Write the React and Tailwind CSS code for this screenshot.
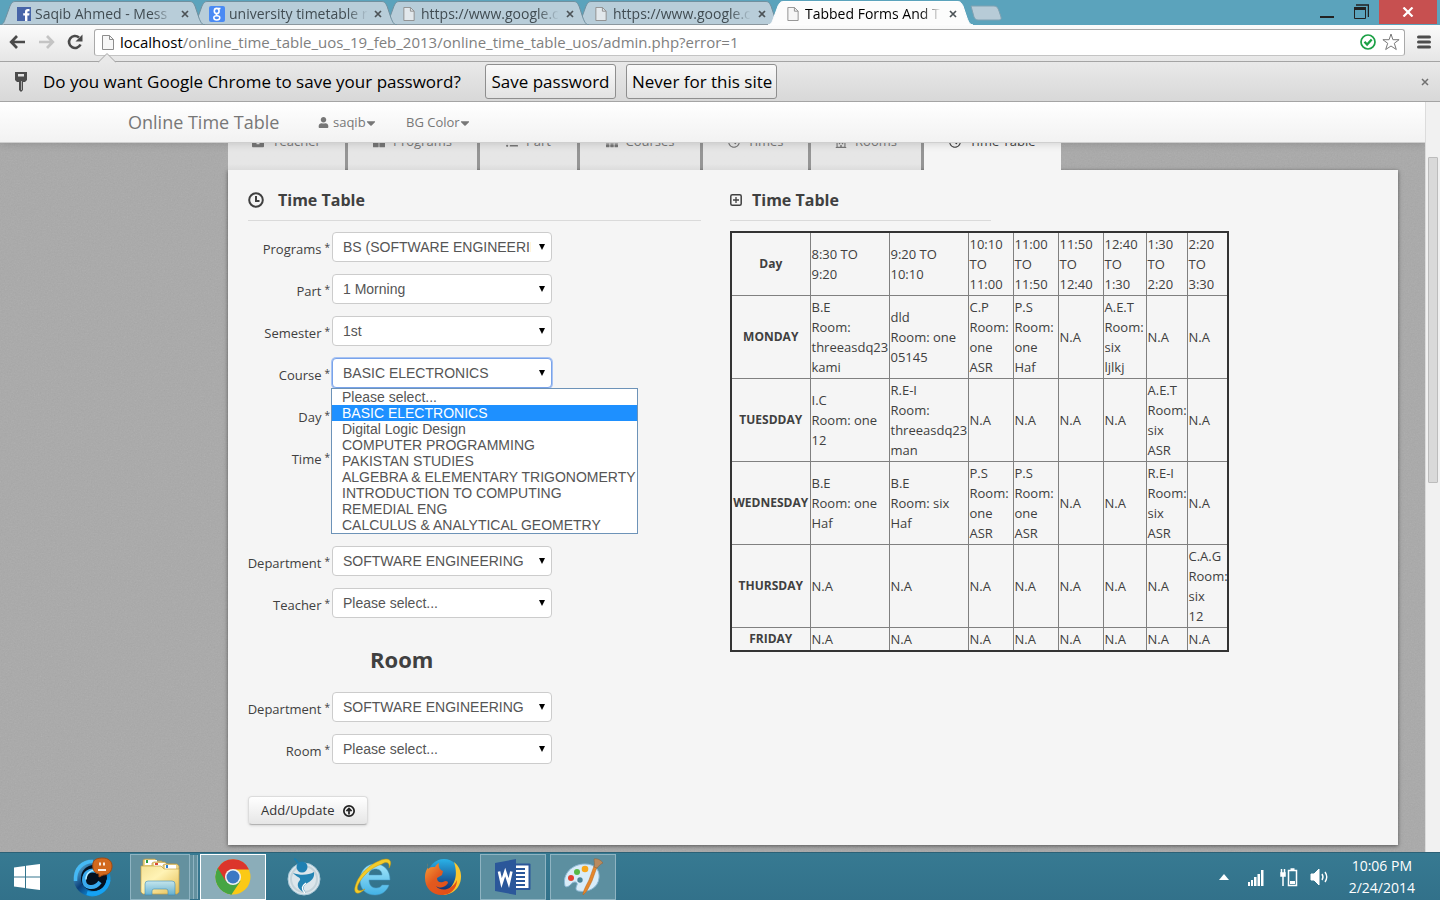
import { useState } from 'react';
import { FaUser, FaCaretDown, FaBriefcase, FaThLarge, FaListUl, FaTh, FaRegClock, FaRegBuilding } from 'react-icons/fa';

const browserTabs = [
  { title: 'Saqib Ahmed - Mess', icon: 'facebook', layer: 'z-[4]' },
  { title: 'university timetable r', icon: 'google', layer: 'z-[3]' },
  { title: 'https://www.google.c', icon: 'page', layer: 'z-[2]' },
  { title: 'https://www.google.c', icon: 'page', layer: 'z-[1]' },
  { title: 'Tabbed Forms And T', icon: 'page', layer: 'z-[5]', active: true },
];

const sections = [
  { name: 'Teacher', Icon: FaBriefcase, width: 'w-[117px]' },
  { name: 'Programs', Icon: FaThLarge, width: 'w-[129px]' },
  { name: 'Part', Icon: FaListUl, width: 'w-[97px]' },
  { name: 'Courses', Icon: FaTh, width: 'w-[120px]' },
  { name: 'Times', Icon: FaRegClock, width: 'w-[105px]' },
  { name: 'Rooms', Icon: FaRegBuilding, width: 'w-[110px]' },
  { name: 'Time Table', Icon: FaRegClock, width: 'w-[137px]', active: true },
];

const courses = [
  'Please select...',
  'BASIC ELECTRONICS',
  'Digital Logic Design',
  'COMPUTER PROGRAMMING',
  'PAKISTAN STUDIES',
  'ALGEBRA & ELEMENTARY TRIGONOMERTY',
  'INTRODUCTION TO COMPUTING',
  'REMEDIAL ENG',
  'CALCULUS & ANALYTICAL GEOMETRY',
];

const slots = [
  '8:30 TO|9:20', '9:20 TO|10:10', '10:10|TO|11:00', '11:00|TO|11:50',
  '11:50|TO|12:40', '12:40|TO|1:30', '1:30|TO|2:20', '2:20|TO|3:30',
];

const days = [
  ['MONDAY', 'B.E|Room:|threeasdq23|kami', 'dld|Room: one|05145', 'C.P|Room:|one|ASR', 'P.S|Room:|one|Haf', 'N.A', 'A.E.T|Room:|six|ljlkj', 'N.A', 'N.A'],
  ['TUESDDAY', 'I.C|Room: one|12', 'R.E-I|Room:|threeasdq23|man', 'N.A', 'N.A', 'N.A', 'N.A', 'A.E.T|Room:|six|ASR', 'N.A'],
  ['WEDNESDAY', 'B.E|Room: one|Haf', 'B.E|Room: six|Haf', 'P.S|Room:|one|ASR', 'P.S|Room:|one|ASR', 'N.A', 'N.A', 'R.E-I|Room:|six|ASR', 'N.A'],
  ['THURSDAY', 'N.A', 'N.A', 'N.A', 'N.A', 'N.A', 'N.A', 'N.A', 'C.A.G|Room:|six|12'],
  ['FRIDAY', 'N.A', 'N.A', 'N.A', 'N.A', 'N.A', 'N.A', 'N.A', 'N.A'],
];

function Lines({ text }) {
  return text.split('|').map((line, i) => <span key={i} className="block whitespace-nowrap">{line}</span>);
}

function PageIcon({ className }) {
  return (
    <svg viewBox="0 0 12 15" className={className}>
      <path d="M.5 .5h7l4 4v10H.5z" fill="#f4f4f4" fillOpacity=".7" stroke="#8d8d8d" />
      <path d="M7.500 .5v4h4" fill="none" stroke="#8d8d8d" />
    </svg>
  );
}

function Favicon({ kind }) {
  if (kind === 'facebook')
    return (
      <svg viewBox="0 0 14 14" className="h-[14px] w-[14px] shrink-0">
        <rect width="14" height="14" fill="#4765a8" />
        <path d="M8 14V8.500H6.200V6.300H8V4.800C8 3 9 2 10.800 2H12.500v2.200h-1.200c-.7 0-.9.3-.9.900v1.200h2.100l-.3 2.200h-1.800V14z" fill="#fff" />
      </svg>
    );
  if (kind === 'google')
    return (
      <svg viewBox="0 0 16 16" className="h-4 w-4 shrink-0">
        <rect width="16" height="16" rx="2" fill="#4a8af4" />
        <ellipse cx="7.700" cy="5" rx="2.400" ry="2.600" fill="none" stroke="#fff" strokeWidth="1.600" />
        <path d="M9 2.500h2.500M8.200 7.500c-1.600.7-1 1.500.5 2.200" fill="none" stroke="#fff" strokeWidth="1.300" />
        <ellipse cx="7.800" cy="11.800" rx="3" ry="2.100" fill="none" stroke="#fff" strokeWidth="1.500" />
      </svg>
    );
  return <PageIcon className="mx-[2px] h-[14px] w-3 shrink-0" />;
}

function BrowserTab({ tab }) {
  return (
    <div className={`relative -ml-[13px] h-[25px] w-[205px] first:ml-0 ${tab.layer}`}>
      <svg viewBox="0 0 205 25" className="absolute inset-0 h-full w-full">
        <path
          d="M0 25C4 24 4 22 6 17L10 6C12 2 13 1.500 16 1.500H189c3 0 4 .5 6 4.500l4 12c2 5 3 6.500 6 7z"
          fill={tab.active ? '#fcfcfc' : '#b8cdd9'}
          stroke={tab.active ? '#fff' : '#71909f'}
        />
        {!tab.active && <path d="M4 24.500H203" stroke="#8b979e" />}
      </svg>
      <div className="relative flex h-full items-center gap-1 pr-3 pl-[17px] pt-[3px]">
        <Favicon kind={tab.icon} />
        <button className={`flex-1 text-left text-[14px] leading-5 whitespace-nowrap [mask-image:linear-gradient(to_right,black_85%,transparent)] ${tab.active ? 'text-black' : 'text-[#414c52]'}`}>
          {tab.title}
        </button>
        <button aria-label="Close tab" className="flex h-4 w-4 items-center justify-center">
          <svg viewBox="0 0 8 8" className="h-2 w-2"><path d="M1 1l6 6M7 1L1 7" stroke="#4c5357" strokeWidth="1.700" /></svg>
        </button>
      </div>
    </div>
  );
}

function TabStrip() {
  return (
    <div className="flex h-[25px] items-start bg-[#5ba3bc]">
      {browserTabs.map((tab, i) => <BrowserTab key={i} tab={tab} />)}
      <button aria-label="New tab" className="mt-[5px] -ml-[3px]">
        <svg viewBox="0 0 32 16" className="h-4 w-8">
          <path d="M1 1h23c3 0 4 2 5 5l2 6c.5 2 0 3-2 3H8c-2 0-3-1-4-3z" fill="#b7cbd7" stroke="#7ea1b2" />
        </svg>
      </button>
      <div className="ml-auto flex h-full items-start">
        <button aria-label="Minimize" className="flex h-6 w-8 items-center justify-center">
          <svg viewBox="0 0 14 14" className="mt-1 h-[14px] w-[14px]"><path d="M0 10h14" stroke="#222" strokeWidth="2" /></svg>
        </button>
        <button aria-label="Restore" className="flex h-6 w-9 items-center justify-center">
          <svg viewBox="0 0 16 16" className="h-4 w-4" fill="none" stroke="#222">
            <path d="M1.500 4v10.500h11V4" /><path d="M1 4.500h12" strokeWidth="3" /><path d="M3 1h12.500v12" strokeWidth="1.500" />
          </svg>
        </button>
        <button aria-label="Close" className="mr-[3px] flex h-6 w-[58px] items-center justify-center bg-[#c75050]">
          <svg viewBox="0 0 12 10" className="h-[10px] w-3"><path d="M1.500 .5l9 9M10.500 .5l-9 9" stroke="#fff" strokeWidth="2.200" /></svg>
        </button>
      </div>
    </div>
  );
}

function Toolbar() {
  return (
    <div className="flex h-9 items-center bg-gradient-to-b from-[#fbfbfb] to-[#e6e6e6] px-[9px] pb-[2px]">
      <div className="flex w-[85px] items-center gap-3">
        <button aria-label="Back">
          <svg viewBox="0 0 17 14" className="h-[14px] w-[17px]" fill="none" stroke="#4a4a4a" strokeWidth="2.700"><path d="M16 7H3M8 1L2.200 7 8 13" /></svg>
        </button>
        <button aria-label="Forward">
          <svg viewBox="0 0 17 14" className="h-[14px] w-[17px]" fill="none" stroke="#c4c4c4" strokeWidth="2.700"><path d="M1 7h13M9 1l5.800 6L9 13" /></svg>
        </button>
        <button aria-label="Reload">
          <svg viewBox="0 0 16 16" className="h-4 w-4" fill="none" stroke="#4a4a4a" strokeWidth="2.600">
            <path d="M13.500 10.500A6 6 0 1 1 12 3.500" /><path d="M15.500 .5v7h-7z" fill="#4a4a4a" stroke="none" />
          </svg>
        </button>
      </div>
      <div className="flex h-[27px] flex-1 items-center rounded-[3px] border border-[#a9a9a9] border-b-[#c4c4c4] bg-white pr-1 pl-[7px]">
        <PageIcon className="h-[15px] w-3" />
        <div className="relative ml-[6px] flex-1 text-[15px] leading-6">
          <input aria-label="Address" readOnly value="" className="absolute inset-0 w-full bg-transparent outline-none" />
          <span className="text-black">localhost</span><span className="text-[#808080]">/online_time_table_uos_19_feb_2013/online_time_table_uos/admin.php?error=1</span>
        </div>
        <svg viewBox="0 0 16 16" className="mr-[6px] h-4 w-4"><circle cx="8" cy="8" r="7" fill="#fff" stroke="#1ba045" strokeWidth="1.700" /><path d="M4.500 7.800l2.600 2.700 4.600-5" fill="none" stroke="#1ba045" strokeWidth="2.300" /></svg>
        <button aria-label="Bookmark">
          <svg viewBox="0 0 18 18" className="h-[18px] w-[18px]"><path d="M9 1l1.900 5.700h6.200l-4.800 3.600 2 6.200L9 13l-5.300 3.500 2-6.200L.9 6.700h6.200z" fill="#fff" stroke="#787878" strokeLinejoin="round" /></svg>
        </button>
      </div>
      <button aria-label="Menu" className="ml-3">
        <svg viewBox="0 0 14 14" className="h-[14px] w-[14px]"><path d="M1.500 2h11M1.500 7h11M1.500 12h11" stroke="#4d4d4d" strokeWidth="3" strokeLinecap="round" /></svg>
      </button>
    </div>
  );
}

function InfoBar() {
  const button = 'h-[35px] rounded-[3px] border border-[#8e8e8e] bg-gradient-to-b from-[#fafafa] to-[#e2e2e2] px-[5px] whitespace-nowrap';
  return (
    <div className="relative flex h-[41px] items-center border-y border-[#a4a4a4] bg-gradient-to-b from-[#e9e9e9] to-[#d8d8d8] pr-[11px] pl-[14px] text-[17px] text-black">
      <svg viewBox="0 0 18 10" className="absolute -top-[9px] left-[98px] h-[10px] w-[18px]"><path d="M0 9.500L9 .5l9 9" fill="#e9e9e9" stroke="#a4a4a4" /><path d="M1 10h16" stroke="#e9e9e9" strokeWidth="1.500" /></svg>
      <svg viewBox="0 0 14 20" className="h-5 w-[14px]"><path d="M1 0h12v8l-2 2H9v8l-2 2-2-2v-8H3L1 8z" fill="#4c4c4c" /><rect x="4" y="2" width="6" height="2.500" fill="#e2e2e2" /><path d="M7.500 9v9" stroke="#aaa" /></svg>
      <span className="ml-[15px] w-[442px]">Do you want Google Chrome to save your password?</span>
      <button className={`${button} w-[131px]`}>Save password</button>
      <button className={`${button} ml-[10px] w-[151px]`}>Never for this site</button>
      <button aria-label="Dismiss" className="ml-auto"><svg viewBox="0 0 8 8" className="h-2 w-2"><path d="M1 1l6 6M7 1L1 7" stroke="#707070" strokeWidth="1.500" /></svg></button>
    </div>
  );
}

function Field({ id, label, options, children, focused }) {
  const [value, setValue] = useState(options[0]);
  return (
    <div className="flex items-start gap-[2px]">
      <label htmlFor={id} className="flex w-[82px] justify-end gap-[3px] pt-[7px] leading-5 whitespace-nowrap">{label}<span className="text-[10px] leading-4">*</span></label>
      <div className="relative w-[220px]">
        <select
          id={id}
          value={value}
          onChange={(e) => setValue(e.target.value)}
          className={`block h-[30px] w-full appearance-none rounded-[4px] border bg-white pr-5 pl-[10px] font-['Liberation_Sans',Arial,sans-serif] text-[14px] text-[#555] outline-none ${focused ? 'border-[#79a3ea] ring-1 ring-[#a9c4f3]' : 'border-[#ccc]'}`}
        >
          {options.map((o) => <option key={o}>{o}</option>)}
        </select>
        <svg viewBox="0 0 6 6" className="pointer-events-none absolute top-3 right-[7px] h-[6px] w-[6px]"><path d="M0 0h6L3 6z" fill="#000" /></svg>
        {children}
      </div>
    </div>
  );
}

function CourseList() {
  return (
    <ul role="listbox" aria-label="Courses" className="absolute top-full -left-px z-20 w-max min-w-[304px] border border-[#6d93b8] bg-white font-['Liberation_Sans',Arial,sans-serif] text-[14px] leading-4 text-[#555]">
      {courses.map((c, i) => (
        <li key={c} role="option" aria-selected={i === 1} className={`pr-px pl-[10px] whitespace-nowrap ${i === 1 ? 'bg-[#1e90ff] text-white' : ''}`}>{c}</li>
      ))}
    </ul>
  );
}

function TimeTableForm() {
  return (
    <form className="w-[453px] shrink-0" onSubmit={(e) => e.preventDefault()}>
      <h3 className="flex h-[31px] items-start border-b border-[#dadada] text-[16px] leading-5 font-bold">
        <svg viewBox="0 0 16 16" className="mt-[2px] mr-[14px] h-4 w-4" fill="none" stroke="#404040" strokeWidth="2"><circle cx="8" cy="8" r="6.800" /><path d="M8 4v5h3.500" /></svg>
        Time Table
      </h3>
      <div className="mt-[11px] flex flex-col gap-3">
        <Field id="program" label="Programs" options={['BS (SOFTWARE ENGINEERING)']} />
        <Field id="part" label="Part" options={['1 Morning']} />
        <Field id="semester" label="Semester" options={['1st']} />
        <Field id="course" label="Course" options={courses.slice(1)} focused><CourseList /></Field>
        <Field id="day" label="Day" options={['']} />
        <Field id="time" label="Time" options={['']} />
      </div>
      <div className="mt-[74px] flex flex-col gap-3">
        <Field id="teacher-department" label="Department" options={['SOFTWARE ENGINEERING']} />
        <Field id="teacher" label="Teacher" options={['Please select...']} />
      </div>
      <h2 className="mt-[21px] mb-[13px] pl-[122px] text-[22px] leading-10 font-bold">Room</h2>
      <div className="flex flex-col gap-3">
        <Field id="room-department" label="Department" options={['SOFTWARE ENGINEERING']} />
        <Field id="room" label="Room" options={['Please select...']} />
      </div>
      <button className="mt-8 flex h-[29px] w-[120px] items-center justify-between rounded-[4px] border border-[#dcdcdc] border-b-[#b3b3b3] bg-gradient-to-b from-white to-[#e6e6e6] px-3 text-[#333] shadow-sm">
        Add/Update
        <svg viewBox="0 0 14 14" className="h-3 w-3" fill="none" stroke="#222" strokeWidth="2"><circle cx="7" cy="7" r="6" /><path d="M7 11V5M4 7.200L7 4l3 3.200" /></svg>
      </button>
    </form>
  );
}

function TimeTable() {
  const cell = 'border border-[#808080] p-px text-left font-normal align-middle';
  return (
    <section>
      <h3 className="flex h-[31px] w-[261px] items-start border-b border-[#dadada] text-[16px] leading-5 font-bold">
        <svg viewBox="0 0 12 12" className="mt-1 mr-[10px] h-3 w-3" fill="none" stroke="#404040"><rect x=".8" y=".8" width="10.400" height="10.400" rx="1.500" strokeWidth="1.500" /><path d="M6 3v6M3 6h6" strokeWidth="1.300" /></svg>
        Time Table
      </h3>
      <table className="mt-[10px] w-[499px] table-fixed border-collapse border-2 border-[#333] leading-5">
        <colgroup>
          <col className="w-[79px]" /><col className="w-[79px]" /><col className="w-[79px]" />
          <col className="w-[45px]" /><col className="w-[45px]" /><col className="w-[45px]" />
          <col className="w-[43px]" /><col className="w-[41px]" /><col className="w-[41px]" />
        </colgroup>
        <thead>
          <tr>
            <th className="border border-[#808080] p-px text-[12px] font-bold">Day</th>
            {slots.map((s) => <th key={s} scope="col" className={cell}><Lines text={s} /></th>)}
          </tr>
        </thead>
        <tbody>
          {days.map(([day, ...entries]) => (
            <tr key={day}>
              <th scope="row" className="border border-[#808080] py-px text-center text-[12px] font-bold">{day}</th>
              {entries.map((e, i) => <td key={i} className={cell}><Lines text={e} /></td>)}
            </tr>
          ))}
        </tbody>
      </table>
    </section>
  );
}

function Grain() {
  return (
    <svg className="absolute inset-0 h-full w-full opacity-15" aria-hidden="true">
      <filter id="grain"><feTurbulence type="fractalNoise" baseFrequency=".7" numOctaves="2" stitchTiles="stitch" /><feColorMatrix type="saturate" values="0" /></filter>
      <rect width="100%" height="100%" filter="url(#grain)" />
    </svg>
  );
}

function Page() {
  return (
    <div className="flex flex-1">
      <main className="relative min-w-0 flex-1 overflow-hidden bg-[#a9a9a9] text-[13px] text-[#404040]">
        <Grain />
        <nav className="relative z-10 flex h-[41px] items-center border-b border-[#cfcfcf] bg-gradient-to-b from-white to-[#f2f2f2] pt-px pl-32 text-[#777] shadow-[0_1px_8px_rgba(0,0,0,0.15)]">
          <a href="#home" className="w-[190px] text-[18px]">Online Time Table</a>
          <a href="#user" className="flex w-[88px] items-center"><FaUser className="mr-1 h-[11px] w-[11px]" />saqib<FaCaretDown className="h-[14px] w-[10px]" /></a>
          <a href="#color" className="flex items-center">BG Color<FaCaretDown className="h-[14px] w-[10px]" /></a>
        </nav>
        <div className="relative -mt-[33px] pr-[27px] pb-[7px] pl-[228px]">
          <div className="flex w-max gap-[3px] bg-[#959595]">
            {sections.map(({ name, Icon, width, active }) => (
              <button key={name} className={`flex h-[60px] items-center justify-center gap-2 pt-[3px] ${width} ${active ? 'bg-[#f5f5f5] text-[#444]' : 'bg-gradient-to-b from-[#e6e6e6] from-90% to-[#dcdcdc] text-[#777]'}`}>
                <Icon className="h-3 w-3" />{name}
              </button>
            ))}
          </div>
          <div className="flex gap-[29px] bg-[#f5f5f5] p-5 shadow-[0_1px_4px_rgba(0,0,0,0.5)]">
            <TimeTableForm />
            <TimeTable />
          </div>
        </div>
      </main>
      <div className="w-[15px] border-l border-[#dcdcdc] bg-[#f1f1f1] pt-[55px] pl-[2px]">
        <div className="h-[326px] w-[10px] rounded-[1px] border border-[#bcbcbc] bg-[#d9d9d9]" />
      </div>
    </div>
  );
}

function WindowsLogo() {
  return (
    <svg viewBox="0 0 26 26" className="h-[26px] w-[26px]" fill="#fff">
      <path d="M0 3.500L11 2v10.500H0zM12 1.800L26 0v12.500H12zM0 13.500h11V24L0 22.500zM12 13.500h14V26l-14-1.800z" />
    </svg>
  );
}

function CamIcon() {
  return (
    <svg viewBox="0 0 40 40" className="h-10 w-10">
      <defs><linearGradient id="cam" x1="0" y1="0" x2="1" y2="1"><stop offset="0" stopColor="#7be0ff" /><stop offset=".45" stopColor="#0b3f7a" /><stop offset=".8" stopColor="#10a5f5" /><stop offset="1" stopColor="#0662b8" /></linearGradient></defs>
      <circle cx="19" cy="21" r="18.500" fill="url(#cam)" />
      <circle cx="21" cy="21" r="13" fill="#04101f" />
      <path d="M2.500 24C2 12 9 4.500 20 4.500" fill="none" stroke="#45b9f5" strokeWidth="3.500" />
      <path d="M14 36c10 3 20-3 21.500-13" fill="none" stroke="#16a2f3" strokeWidth="4" />
      <path d="M25 15c-8-4-14 1-14 8 0 8 10 10 16 2" fill="none" stroke="#39a9ee" strokeWidth="4" />
      <path d="M24 14.500c-6-3-11 2-11 8" fill="none" stroke="#b5ebff" strokeWidth="1.500" />
      <path d="M20 6c1-4 5-5 10-5s9 3 9 8-3 9-9 9l-4 2v-3c-5-1-7-5-6-11z" fill="#d2691e" stroke="#a3490f" />
      <path d="M27 5.500v3M31 5.500v3" stroke="#fff" strokeWidth="1.700" /><path d="M25 13h8" stroke="#fff" strokeWidth="1.800" />
    </svg>
  );
}

function FolderIcon() {
  return (
    <svg viewBox="0 0 40 38" className="h-[38px] w-10">
      <defs>
        <linearGradient id="folder" x1="0" y1="0" x2="1" y2="1"><stop offset="0" stopColor="#f3e195" /><stop offset=".4" stopColor="#fff3b5" /><stop offset="1" stopColor="#e3bb50" /></linearGradient>
        <linearGradient id="stand" x1="0" y1="0" x2="0" y2="1"><stop offset="0" stopColor="#bfe5f4" /><stop offset="1" stopColor="#58aedb" /></linearGradient>
      </defs>
      <path d="M3 10V2l2-1h10l2 2h5v8z" fill="#ecd486" stroke="#b89a4a" strokeWidth=".7" />
      <path d="M5 2h12v5H5z" fill="#fff" /><path d="M6 2h2v3H6z" fill="#2c9b3e" />
      <path d="M12 11V5l2-1h11l2 2h7v7z" fill="#ecd486" stroke="#b89a4a" strokeWidth=".7" />
      <path d="M14 5h12v4H14z" fill="#fff" /><path d="M15 5h3v2h-3z" fill="#dc4736" />
      <path d="M23 14V7l2-1h12l2 2v8z" fill="#ecd486" stroke="#b89a4a" strokeWidth=".7" />
      <path d="M25 7h11v4H25z" fill="#fff" /><path d="M26 7h2v3h-2z" fill="#2e7fd0" />
      <path d="M1 8h20l3 3h15v23l-2 2H3l-2-2z" fill="url(#folder)" stroke="#c7a347" strokeWidth=".7" />
      <path d="M5 37V26q0-3 3-3h24q3 0 3 3v11h-7v-4q0-2-2-2H14q-2 0-2 2v4z" fill="url(#stand)" stroke="#458fb5" strokeWidth=".6" fillOpacity=".9" />
    </svg>
  );
}

function ChromeIcon() {
  return (
    <svg viewBox="0 0 36 36" className="h-9 w-9">
      <circle cx="18" cy="18" r="17.500" fill="#fbc916" />
      <path d="M18 18L2.800 9.300A17.500 17.500 0 0 0 16.500 35.400L25.500 22z" fill="#46a543" />
      <path d="M2.800 9.300A17.500 17.500 0 0 1 34 10.500H18L10.500 22z" fill="#dc352b" />
      <path d="M2.800 9.300L10.500 22l7.500 5-1.500 8.400A17.500 17.500 0 0 1 2.800 9.300z" fill="#46a543" />
      <circle cx="18" cy="18" r="8" fill="#f2f2f2" /><circle cx="18" cy="18" r="6.500" fill="#3c79c4" />
    </svg>
  );
}

function BirdIcon() {
  return (
    <svg viewBox="0 0 36 38" className="h-[38px] w-9">
      <circle cx="19" cy="21" r="16" fill="#dce6eb" stroke="#a9c9d8" />
      <circle cx="19" cy="21" r="13" fill="none" stroke="#c3d3da" strokeWidth="2" />
      <path d="M9 1c2 0 3 2 4 4" fill="none" stroke="#1a7dac" strokeWidth="2" />
      <circle cx="17" cy="9" r="5.500" fill="#1f80b2" />
      <path d="M8 15c8 3 16 2 21-1 1 6-3 9-8 12-4 3-2 6 0 9-7-2-11-8-6-13 1-3-4-3-7-7z" fill="#2384b3" />
      <path d="M20 35c-4-4-3-7 1-10" fill="none" stroke="#fff" strokeWidth="1.500" />
    </svg>
  );
}

function ExplorerIcon() {
  return (
    <svg viewBox="0 0 40 38" className="h-[38px] w-10">
      <defs><linearGradient id="ie" x1="0" y1="0" x2="0" y2="1"><stop offset="0" stopColor="#a3e6fa" /><stop offset="1" stopColor="#42b2e6" /></linearGradient></defs>
      <path d="M37 22H16c0 5 3 8 7 8 3 0 5-1 6-3h7c-2 6-7 10-14 10-9 0-15-6-15-15S13 6 22 6s15 6 15 16zM16 17h13c0-4-3-6-6.500-6S16 13 16 17z" fill="url(#ie)" stroke="#4596c0" strokeWidth=".5" />
      <path d="M12 31C5 38-1 36 3 26 7 14 22 2 33 1c5 0 6 4 3 9 1-5-2-7-7-4C19 9 9 18 5 27c-2 6 1 7 7 4z" fill="#f4cc29" stroke="#c09210" strokeWidth=".5" />
    </svg>
  );
}

function FirefoxIcon() {
  return (
    <svg viewBox="0 0 38 38" className="h-[38px] w-[38px]">
      <defs>
        <linearGradient id="globe" x1="0" y1="0" x2="0" y2="1"><stop offset="0" stopColor="#2ab2e8" /><stop offset="1" stopColor="#102e70" /></linearGradient>
        <linearGradient id="fox" x1="0" y1="0" x2="1" y2="1"><stop offset="0" stopColor="#f6a13a" /><stop offset=".4" stopColor="#e25a1f" /><stop offset="1" stopColor="#e34a15" /></linearGradient>
      </defs>
      <circle cx="20" cy="17" r="16" fill="url(#globe)" />
      <path d="M30 4c8 6 9 17 4 25-4 6-11 8-15 8l8-8c4-5 7-13 3-25z" fill="#fbc62e" />
      <path d="M4 5c-1 3-1 5 0 6 2-2 4-2 7-2 1-2 2-3 4-4-1 4 1 7 4 8l-1 4-5 3c0 4 3 5 6 4 3-2 5-1 5 1-4 6-10 5-12 3 3 5 15 6 21-6 0 9-7 15-15 15C8 37 1 30 1 20 1 15 2 13 3 11z" fill="url(#fox)" />
    </svg>
  );
}

function WordIcon() {
  return (
    <svg viewBox="0 0 36 36" className="h-9 w-9">
      <rect x="16" y="4.500" width="19.500" height="26.500" rx="1" fill="#2b579a" />
      <rect x="18" y="6.500" width="15.500" height="22.500" fill="#fff" />
      <path d="M18 10h12M18 14h12M18 18h12M18 22h12M18 26h12" stroke="#2b579a" strokeWidth="2" />
      <path d="M0 4L21 0v36L0 32z" fill="#2b579a" />
      <path d="M4 12.500l2.600 11.500 3.600-11 3.600 11 2.600-11.500" fill="none" stroke="#fff" strokeWidth="2.600" />
    </svg>
  );
}

function PaintIcon() {
  return (
    <svg viewBox="0 0 40 38" className="h-[38px] w-10">
      <path d="M2 28C-1 16 9 6 22 6c10 0 15 6 14 14-1 10-11 15-21 13-3-1-2-4-1-6 1-3-2-4-5-2-2 3-6 5-7 3z" fill="#d9ecf8" stroke="#8cb9d6" />
      <circle cx="17" cy="22" r="2.700" fill="#4b8497" />
      <circle cx="8" cy="20" r="3" fill="#e34231" /><circle cx="14" cy="14" r="3" fill="#57b947" /><circle cx="22" cy="11" r="3.300" fill="#f7a71b" />
      <path d="M20 37c0-4 3-9 6-15l5-14 3 1-5 14c-3 6-5 11-9 14z" fill="#e5872c" stroke="#b5641a" strokeWidth=".5" />
      <path d="M31 9c1-3 0-6 0-8 3-1 7 1 9 4-3 1-4 3-6 5z" fill="#b98a5e" stroke="#8a623b" strokeWidth=".5" />
    </svg>
  );
}

const apps = [
  { name: 'CyberLink', Icon: CamIcon, look: '' },
  { name: 'File Explorer', Icon: FolderIcon, look: 'border border-[#8fb4c2] bg-[#64919f] mr-[6px] w-[60px] shadow-[4px_0_0_-1px_#64919f,5px_0_0_-1px_#8fb4c2,8px_0_0_-1px_#64919f,9px_0_0_-1px_#8fb4c2]' },
  { name: 'Google Chrome', Icon: ChromeIcon, look: 'border border-white bg-[#8badb9]' },
  { name: 'Messenger', Icon: BirdIcon, look: '' },
  { name: 'Internet Explorer', Icon: ExplorerIcon, look: '' },
  { name: 'Firefox', Icon: FirefoxIcon, look: '' },
  { name: 'Word', Icon: WordIcon, look: 'border border-[#8fb4c2] bg-[#5c8fa0]' },
  { name: 'Paint', Icon: PaintIcon, look: 'border border-[#8fb4c2] bg-[#5c8fa0]' },
];

function Taskbar() {
  return (
    <footer className="flex h-12 items-center border-t border-[#2c6176] bg-gradient-to-b from-[#377a92] to-[#32718a] text-white">
      <button aria-label="Start" className="mr-[6px] flex w-[54px] items-center justify-center"><WindowsLogo /></button>
      <div className="flex gap-1">
        {apps.map(({ name, Icon, look }) => (
          <button key={name} aria-label={name} className={`flex h-[46px] items-center justify-center ${name === 'File Explorer' ? '' : 'w-[66px]'} ${look}`}><Icon /></button>
        ))}
      </div>
      <div className="ml-auto flex items-center gap-[11px] pr-[25px]">
        <svg viewBox="0 0 10 6" className="h-[6px] w-[10px]"><path d="M0 6l5-6 5 6z" fill="#fff" /></svg>
        <svg viewBox="0 0 16 18" className="ml-2 h-[18px] w-4" fill="#fff"><path d="M0 14h2v4H0zM3 12h2v6H3zM6 9h2.500v9H6zM9.500 6h2.500v12H9.500zM13 2h2.500v16H13z" /></svg>
        <svg viewBox="0 0 20 20" className="ml-1 h-5 w-5" fill="none" stroke="#fff" strokeWidth="1.500"><path d="M2.500 2v4M5.500 2v4M4 9v10" /><path d="M2 6h4v3H2z" fill="#fff" /><path d="M9.500 3.500h8v15h-8zM11.500 2h4" /><path d="M11 15.500h5" strokeWidth="3" /></svg>
        <svg viewBox="0 0 20 20" className="h-5 w-5" fill="none" stroke="#fff"><path d="M1 7h3l5-5v16l-5-5H1z" fill="#fff" /><path d="M12 7q2 3 0 6M15 5q3.500 5 0 10" strokeWidth="1.400" /></svg>
        <div className="ml-2 text-center text-[14px] leading-[22px]"><div>10:06 PM</div><div>2/24/2014</div></div>
      </div>
    </footer>
  );
}

export default function App() {
  return (
    <div className="flex min-h-screen flex-col font-['Open_Sans','Noto_Sans',sans-serif]">
      <header>
        <TabStrip />
        <Toolbar />
        <InfoBar />
      </header>
      <Page />
      <Taskbar />
    </div>
  );
}
